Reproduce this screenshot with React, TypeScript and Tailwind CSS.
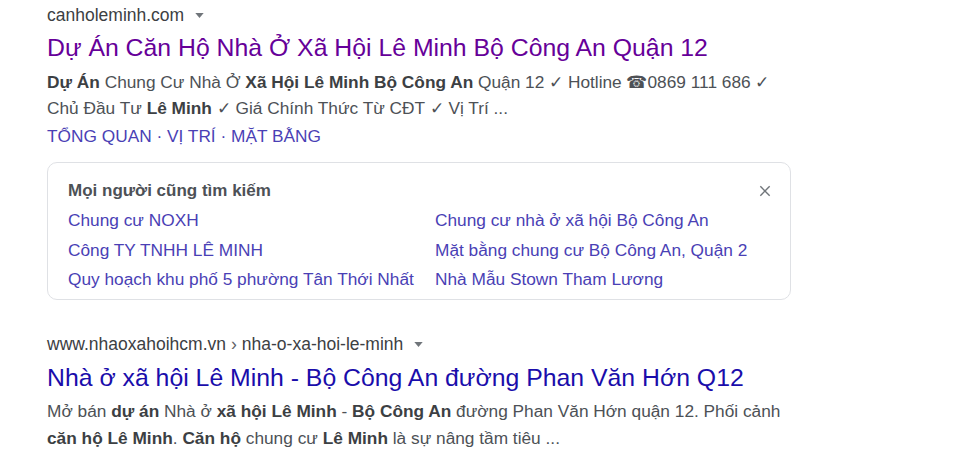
import React from 'react';

const RELATED: [string, string][] = [
  ['Chung cư NOXH', 'Chung cư nhà ở xã hội Bộ Công An'],
  ['Công TY TNHH LÊ MINH', 'Mặt bằng chung cư Bộ Công An, Quận 2'],
  ['Quy hoạch khu phố 5 phường Tân Thới Nhất', 'Nhà Mẫu Stown Tham Lương'],
];

function Caret() {
  return (
    <svg viewBox="0 0 10 6" className="ml-[11px] h-[5px] w-[9px] fill-[#70757a]">
      <path d="M0 0h10L5 6z" />
    </svg>
  );
}

export default function App() {
  return (
    <div
      className="h-[467px] w-[960px] overflow-hidden bg-white pl-[47px] pt-[4px] text-[#4d5156]"
      style={{ fontFamily: '"Liberation Sans", Arial, sans-serif' }}
    >
      {/* ── result 1 ─────────────────────────────────────────────── */}
      <div className="flex h-[22px] items-center text-[17.5px] text-[#3c4043]">
        canholeminh.com
        <Caret />
      </div>
      <div className="mt-[7px] text-[24.8px] leading-[30px] text-[#660099]">
        Dự Án Căn Hộ Nhà Ở Xã Hội Lê Minh Bộ Công An Quận 12
      </div>
      <div className="mt-[6px] text-[17.3px] leading-[26px]">
        <div>
          <b className="text-[#3c4043]">Dự Án</b> Chung Cư Nhà Ở{' '}
          <b className="text-[#3c4043]">Xã Hội Lê Minh Bộ Công An</b> Quận 12 ✓ Hotline ☎0869 111 686 ✓
        </div>
        <div>
          Chủ Đầu Tư <b className="text-[#3c4043]">Lê Minh</b> ✓ Giá Chính Thức Từ CĐT ✓ Vị Trí ...
        </div>
      </div>
      <div className="mt-[4px] text-[17.3px] leading-[22px] text-[#4a3fb5]">
        TỔNG QUAN · VỊ TRÍ · MẶT BẰNG
      </div>

      {/* ── people also search ───────────────────────────────────── */}
      <div className="mt-[15px] w-[744px] rounded-[10px] border border-[#dfe1e5] pb-[4px] pl-[20px] pr-[18px] pt-[16px]">
        <div className="flex items-center justify-between">
          <div className="text-[17px] font-bold leading-[24px] text-[#4d5156]">Mọi người cũng tìm kiếm</div>
          <svg viewBox="0 0 24 24" className="h-[14px] w-[14px] stroke-[#70757a]" strokeWidth={2.4}>
            <path d="M4 4l16 16M20 4L4 20" />
          </svg>
        </div>
        <div className="mt-[3px] grid grid-cols-[367px_1fr] text-[17.3px] leading-[29.5px] text-[#4a3fb5]">
          {RELATED.map(([a, b]) => (
            <React.Fragment key={a}>
              <div>{a}</div>
              <div>{b}</div>
            </React.Fragment>
          ))}
        </div>
      </div>

      {/* ── result 2 ─────────────────────────────────────────────── */}
      <div className="mt-[34px] flex h-[22px] items-center text-[17.5px] text-[#3c4043]">
        www.nhaoxahoihcm.vn<span className="mx-[5px] text-[#5f6368]">›</span>nha-o-xa-hoi-le-minh
        <Caret />
      </div>
      <div className="mt-[7px] text-[24.8px] leading-[30px] text-[#1a0dab]">
        Nhà ở xã hội Lê Minh - Bộ Công An đường Phan Văn Hớn Q12
      </div>
      <div className="mt-[5px] text-[17.3px] leading-[27px]">
        <div>
          Mở bán <b className="text-[#3c4043]">dự án</b> Nhà ở <b className="text-[#3c4043]">xã hội Lê Minh</b> -{' '}
          <b className="text-[#3c4043]">Bộ Công An</b> đường Phan Văn Hớn quận 12. Phối cảnh
        </div>
        <div>
          <b className="text-[#3c4043]">căn hộ Lê Minh</b>. <b className="text-[#3c4043]">Căn hộ</b> chung cư{' '}
          <b className="text-[#3c4043]">Lê Minh</b> là sự nâng tầm tiêu ...
        </div>
      </div>
    </div>
  );
}
